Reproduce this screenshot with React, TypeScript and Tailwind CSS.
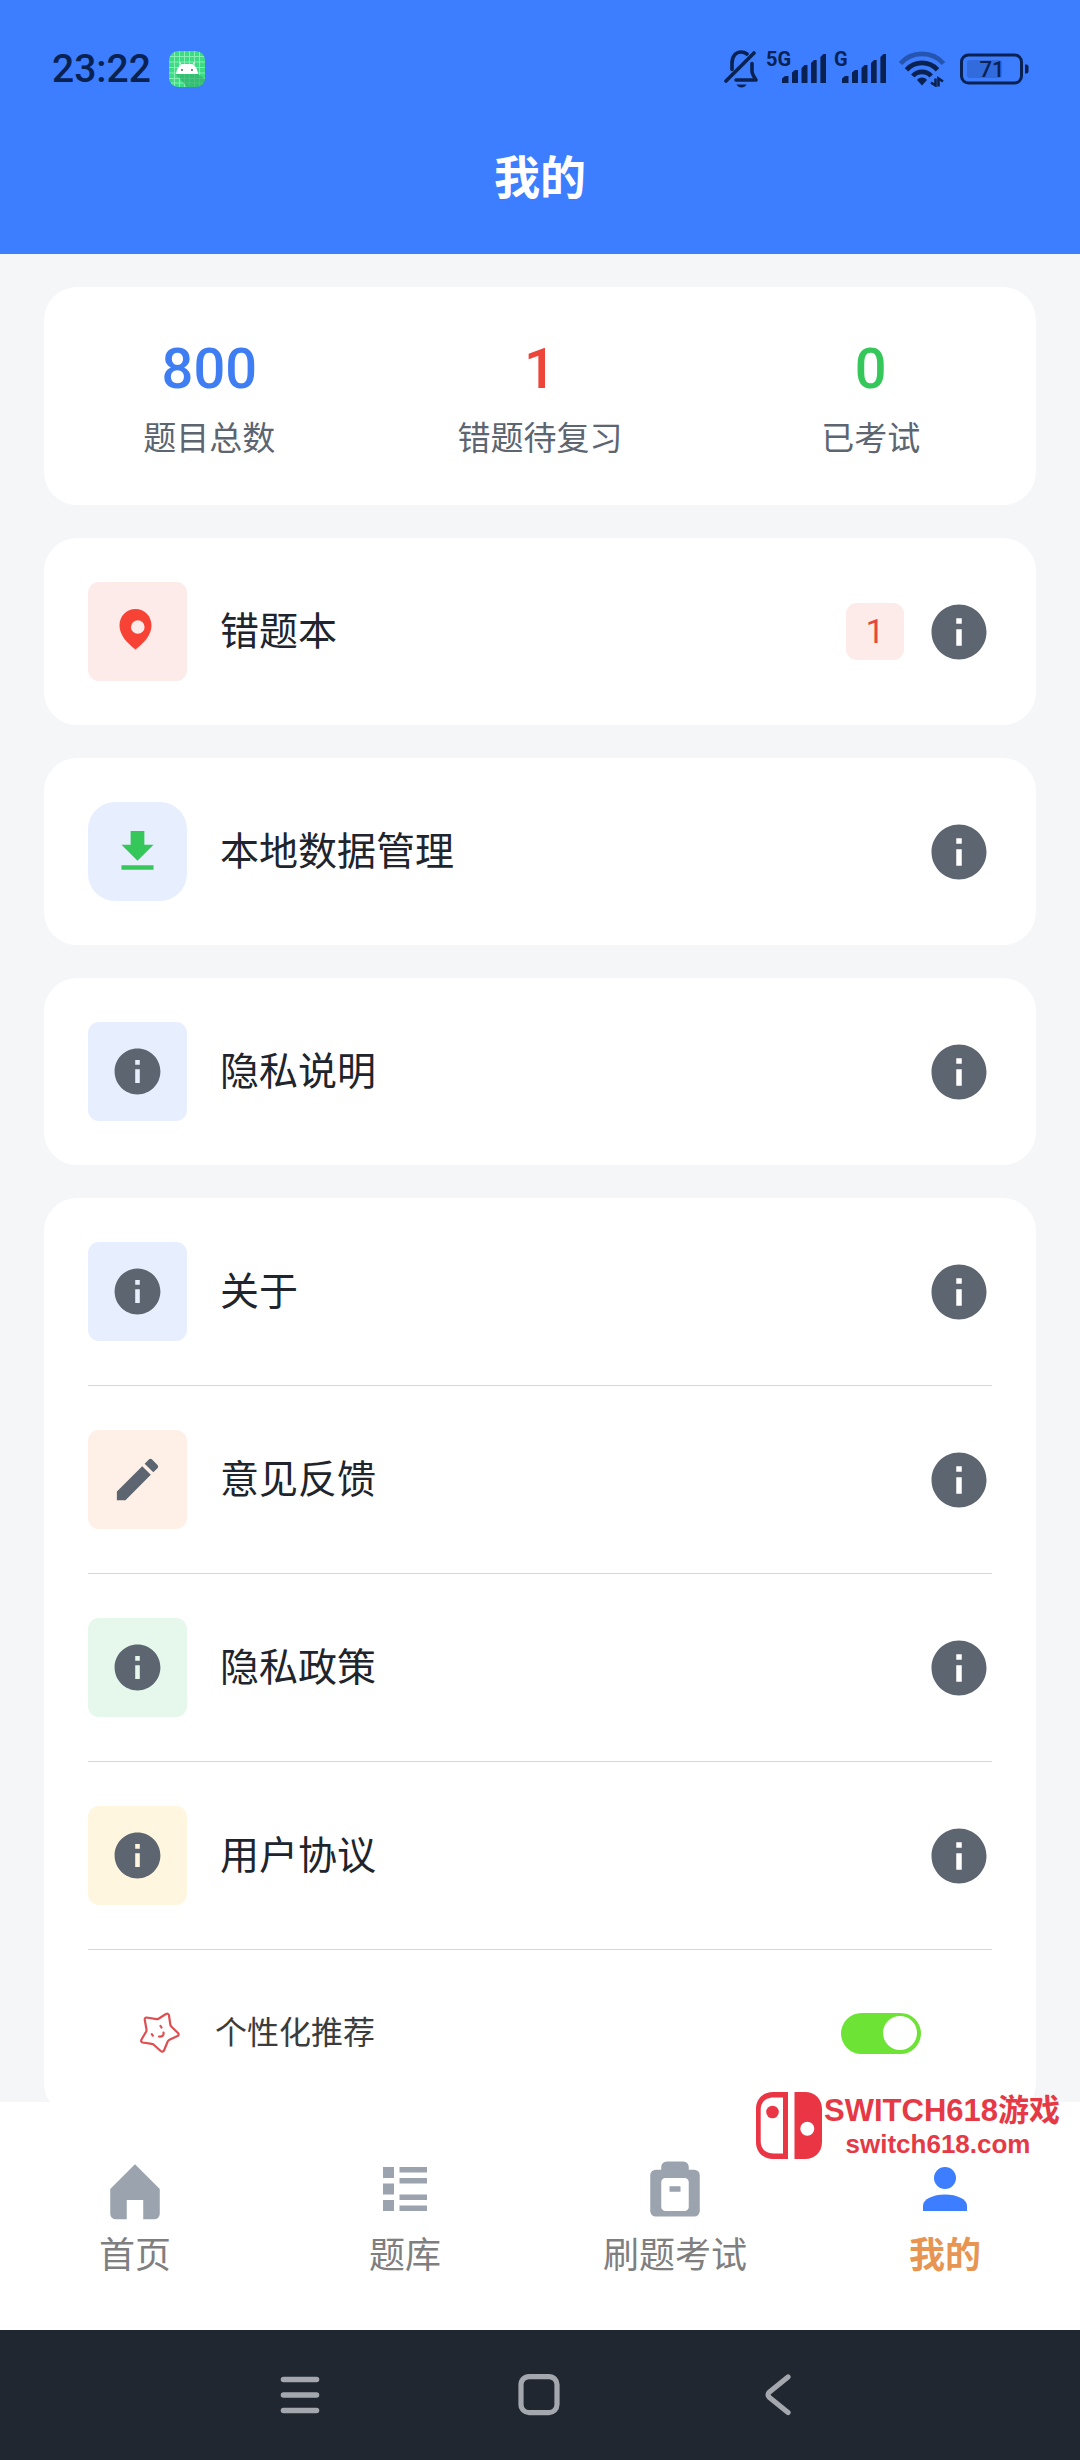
import { useState } from 'react';
import type { ReactNode } from 'react';

interface StatItem {
  label: string;
  value: number;
  color: string;
}

interface MenuItem {
  id: string;
  title: string;
  icon: ReactNode;
  iconClass: string;
  badge?: number;
}

interface TabItem {
  id: string;
  title: string;
  icon: ReactNode;
}

const stats: StatItem[] = [
  { label: '题目总数', value: 800, color: 'text-[#3f7ef2]' },
  { label: '错题待复习', value: 1, color: 'text-[#ee4539]' },
  { label: '已考试', value: 0, color: 'text-[#36c75a]' },
];

const InfoIcon = ({ className }: { className: string }) => (
  <svg viewBox="0 0 24 24" className={className} fill="currentColor" aria-hidden="true">
    <path d="M12 2C6.48 2 2 6.48 2 12s4.48 10 10 10 10-4.48 10-10S17.52 2 12 2zm1 15h-2v-6h2v6zm0-8h-2V7h2v2z" />
  </svg>
);

const PinIcon = () => (
  <svg viewBox="0 0 55 55" className="size-[55px]" fill="#f64336" aria-hidden="true">
    <path
      fillRule="evenodd"
      d="M25.500 5C16.500 5 9.500 12 9.500 21.500C9.500 31 17 39 25.500 45.500C34 39 41.500 31 41.500 21.500C41.500 12 34.500 5 25.500 5ZM27.800 16.200a6.800 6.800 0 1 1 0 13.600a6.800 6.800 0 1 1 0-13.600Z"
    />
  </svg>
);

const DownloadIcon = () => (
  <svg viewBox="0 0 24 24" className="size-[55px]" fill="#36c75a" aria-hidden="true">
    <path d="M19 9h-4V3H9v6H5l7 7 7-7zM5 18v2h14v-2H5z" />
  </svg>
);

const EditIcon = () => (
  <svg viewBox="0 0 24 24" className="size-[55px]" fill="#5c6570" aria-hidden="true">
    <path d="M3 17.250V21h3.750L17.810 9.940l-3.750-3.750L3 17.250zM20.710 7.040c.390-.390.390-1.020 0-1.410l-2.340-2.340c-.390-.390-1.020-.390-1.410 0l-1.830 1.830 3.750 3.750 1.830-1.830z" />
  </svg>
);

const smallInfo = <InfoIcon className="size-[55px] text-[#5c6570]" />;

const mainMenu: MenuItem[] = [
  { id: 'wrong', title: '错题本', icon: <PinIcon />, iconClass: 'rounded-[11px] bg-[#fdebe9]', badge: 1 },
  { id: 'data', title: '本地数据管理', icon: <DownloadIcon />, iconClass: 'rounded-[27px] bg-[#e7efff]' },
  { id: 'privacy', title: '隐私说明', icon: smallInfo, iconClass: 'rounded-[11px] bg-[#e7efff]' },
];

const moreMenu: MenuItem[] = [
  { id: 'about', title: '关于', icon: smallInfo, iconClass: 'rounded-[11px] bg-[#e7efff]' },
  { id: 'feedback', title: '意见反馈', icon: <EditIcon />, iconClass: 'rounded-[11px] bg-[#fff0e7]' },
  { id: 'policy', title: '隐私政策', icon: smallInfo, iconClass: 'rounded-[11px] bg-[#e6f8ec]' },
  { id: 'agreement', title: '用户协议', icon: smallInfo, iconClass: 'rounded-[11px] bg-[#fff6e0]' },
];

const tabs: TabItem[] = [
  {
    id: 'home',
    title: '首页',
    icon: <path d="M12 3L3 12v9a2 2 0 0 0 2 2h4v-7h6v7h4a2 2 0 0 0 2-2v-9z" />,
  },
  {
    id: 'bank',
    title: '题库',
    icon: (
      <path d="M4 4h4v4H4zM4 10h4v4H4zM4 16h4v4H4zM10 4h10v2H10zM10 8h10v2H10zM10 14h10v2H10zM10 18h10v2H10z" />
    ),
  },
  {
    id: 'exam',
    title: '刷题考试',
    icon: (
      <path
        fillRule="evenodd"
        d="M9 2h6a2 2 0 0 1 2 2v1h2a2 2 0 0 1 2 2v13a2 2 0 0 1-2 2H5a2 2 0 0 1-2-2V7a2 2 0 0 1 2-2h2V4a2 2 0 0 1 2-2zM8.500 8A1.500 1.500 0 0 0 7 9.500v9A1.500 1.500 0 0 0 8.500 20h7a1.500 1.500 0 0 0 1.500-1.500v-9A1.500 1.500 0 0 0 15.500 8zM10 11h4v2h-4z"
      />
    ),
  },
  {
    id: 'mine',
    title: '我的',
    icon: (
      <>
        <circle cx="12" cy="8" r="4" />
        <path d="M12 14c-4.420 0-8 1.790-8 4v2h16v-2c0-2.210-3.580-4-8-4z" />
      </>
    ),
  },
];

export default function App() {
  const [activeTab, setActiveTab] = useState('mine');
  const [recommend, setRecommend] = useState(true);

  return (
    <div
      lang="zh-CN"
      className="relative flex h-screen flex-col bg-[#f4f6f8] font-[Roboto,'Noto_Sans_CJK_SC',sans-serif] text-[#20242c]"
    >
      <header className="bg-[#3c7eff]">
        <StatusBar />
        <h1 className="flex h-[151px] items-center justify-center text-[46px] font-bold text-white">我的</h1>
      </header>

      <main className="min-h-0 flex-1 space-y-[33px] overflow-y-auto px-11 pt-[33px] [scrollbar-width:none]">
        <section className="grid grid-cols-3 rounded-[33px] bg-white py-11 text-center">
          {stats.map((stat) => (
            <div key={stat.label}>
              <p className={`text-[56px] leading-[76px] font-medium ${stat.color}`}>{stat.value}</p>
              <p className="mt-2.5 text-[33px] leading-[44px] text-[#5c6570]">{stat.label}</p>
            </div>
          ))}
        </section>

        {mainMenu.map((item) => (
          <section key={item.id} className="rounded-[33px] bg-white px-11">
            <MenuRow item={item} />
          </section>
        ))}

        <section className="rounded-[33px] bg-white px-11">
          {moreMenu.map((item) => (
            <div key={item.id} className="border-b border-[#d6d7d9]">
              <MenuRow item={item} />
            </div>
          ))}
          <div className="flex h-[166px] items-center pr-[71px] pl-[50px]">
            <StarIcon />
            <label htmlFor="recommend" className="ml-[33px] flex-1 text-[32px] text-[#3c3c3c]">
              个性化推荐
            </label>
            <input
              id="recommend"
              type="checkbox"
              role="switch"
              checked={recommend}
              onChange={(e) => setRecommend(e.target.checked)}
              className="flex h-[41px] w-20 appearance-none items-center rounded-full bg-gray-300 px-1 before:size-[34px] before:rounded-full before:bg-white checked:justify-end checked:bg-[#6ce335]"
            />
          </div>
        </section>
      </main>

      <div className="relative">
        <Watermark />
        <nav className="grid grid-cols-4 bg-white pt-[54px] pb-[52px]">
          {tabs.map((tab) => {
            const active = tab.id === activeTab;
            return (
              <a
                key={tab.id}
                href={`#${tab.id}`}
                onClick={() => setActiveTab(tab.id)}
                className="flex flex-col items-center gap-3"
              >
                <svg
                  viewBox="0 0 24 24"
                  fill="currentColor"
                  className={`size-[66px] ${active ? 'text-[#3c7eff]' : 'text-[#9ba3af]'}`}
                  aria-hidden="true"
                >
                  {tab.icon}
                </svg>
                <span
                  className={`text-[36px] leading-[44px] ${active ? 'font-bold text-[#e89551]' : 'text-[#7f7f7f]'}`}
                >
                  {tab.title}
                </span>
              </a>
            );
          })}
        </nav>
      </div>

      <SystemNav />
    </div>
  );
}

function MenuRow({ item }: { item: MenuItem }) {
  return (
    <button type="button" className="flex w-full items-center py-11 text-left">
      <span className={`flex size-[99px] items-center justify-center ${item.iconClass}`}>{item.icon}</span>
      <span className="ml-[33px] flex-1 text-[39px] leading-[52px]">{item.title}</span>
      {item.badge !== undefined && (
        <span className="mr-[22px] flex h-[57px] w-[58px] items-center justify-center rounded-[11px] bg-[#fdebe9] text-[33px] text-[#e5483e]">
          {item.badge}
        </span>
      )}
      <InfoIcon className="size-[66px] text-[#5c6570]" />
    </button>
  );
}

function StarIcon() {
  return (
    <svg
      viewBox="0 0 44 44"
      className="size-11"
      fill="none"
      stroke="#df4f52"
      strokeWidth="2.200"
      strokeLinejoin="round"
      strokeLinecap="round"
      aria-hidden="true"
    >
      <path d="M8.500 6.500L18.500 8.200Q19.500 8.300 20.500 7.700L28 3Q30.500 2 31 4.500L32.300 13.500Q32.500 14.800 33.500 15.700L40 22Q41.500 24 39.500 25L31.500 28.800Q30.300 29.300 29.700 30.500L26 39.500Q24.500 41.500 22.700 40L15.800 33.800Q15 33 13.800 32.900L4.500 31.500Q2.500 30.800 3.500 28.500L8.200 20.500Q8.700 19.500 8.500 18.500L6.800 9Q6.500 6.800 8.500 6.500Z" />
      <path d="M13.800 23.200l1 1.500M22.500 15l1 1.500M21 25.500c3 .8 5-1 4.500-4" />
    </svg>
  );
}

function SignalIcon({ network, width, className }: { network: string; width: number; className: string }) {
  const x = width - 44;
  return (
    <svg viewBox={`0 -6 ${width} 48`} className={className} fill="currentColor" role="img" aria-label={network}>
      <text x="0" y="15" fontSize="20" fontWeight="700">
        {network}
      </text>
      <path
        transform={`translate(${x} 3)`}
        d="M0 29v-4.500l3-2.500h3.500v7zM10 29V18.500l3-2.500h3v13zM19.500 29V14l3-3h3v18zM29 29V9l3-3h2.700v23zM38.400 29V3l3-3H44v29z"
      />
    </svg>
  );
}

function StatusBar() {
  return (
    <div className="flex h-[103px] items-center justify-between pt-[51px] pr-[51px] pb-4 pl-[52px] text-[#0a2252]">
      <div className="flex items-center gap-[18px]">
        <time className="text-[39px] leading-9 font-medium">23:22</time>
        <svg viewBox="0 0 36 36" className="size-9" aria-hidden="true">
          <rect width="36" height="36" rx="9" fill="#3ddc84" />
          <path
            d="M5.500 1v34M10.500 0v36M15.500 0v36M20.500 0v36M25.500 0v36M30.500 1v34M1 5.500h34M0 11h36M0 16.500h36M0 22h36M0 27.500h36M2 32h32"
            stroke="#8ff0b8"
            strokeWidth="0.900"
          />
          <path d="M7 23h22l7 5v1q-1 7-9 7h-9z" fill="#2fb26b" opacity="0.700" />
          <path d="M12.500 14.500l-2-3.500M23.500 14.500l2-3.500" stroke="#fff" strokeWidth="1" />
          <path d="M7 23c.5-5 3-9.500 7.500-10h7c4.500.5 7 5 7.500 10z" fill="#fff" />
          <circle cx="13" cy="19" r="0.900" fill="#2a5b41" />
          <circle cx="23" cy="19" r="0.900" fill="#2a5b41" />
        </svg>
      </div>

      <div className="flex items-center gap-2">
        <svg viewBox="0 0 34 38" className="h-[38px] w-[34px]" fill="none" stroke="currentColor" strokeWidth="3.600" strokeLinecap="round" strokeLinejoin="round" aria-hidden="true">
          <path d="M2 31L30 3M8 19.500V13.500C8 6 12 2 17 2c2.500 0 4.500.8 6 2M28 13.500V21c0 3 2 6 4 9H12" />
          <path d="M12.500 34.500h10c-1.500 4-8.500 4-10 0z" fill="currentColor" stroke="none" />
        </svg>
        <SignalIcon network="5G" width={60} className="h-12 w-[60px]" />
        <SignalIcon network="G" width={52} className="h-12 w-[52px]" />
        <svg viewBox="0 0 54 36" className="h-9 w-[54px]" fill="none" stroke="currentColor" strokeWidth="4.800" aria-hidden="true">
          <path d="M6.500 12.500A29 29 0 0 1 49.500 12.500" opacity="0.450" />
          <path d="M12.500 18.800A21 21 0 0 1 43.500 18.800" />
          <path d="M18.800 25A12.500 12.500 0 0 1 37.200 25" />
          <path d="M28 26.500c2.500 0 4 1 5 2.500L28 34.500l-5-5.500c1-1.500 2.500-2.500 5-2.500z" fill="currentColor" stroke="none" />
          <path d="M37 31.500l4.500 3V27.500M49 30.500L44.500 27.500v8" strokeWidth="2.600" />
        </svg>
        <svg viewBox="0 0 73 32" className="h-8 w-[73px]" role="img" aria-label="71%">
          <rect x="5.500" y="2" width="60" height="28" rx="7" fill="none" stroke="currentColor" strokeWidth="3" />
          <rect x="11" y="7" width="35" height="18" rx="3" fill="#0a2252" opacity="0.200" />
          <path d="M69 11.500h1.500q2 0 2 2v5q0 2-2 2H69z" fill="currentColor" />
          <text x="36" y="24" textAnchor="middle" fontSize="22" fontWeight="500" fill="currentColor">
            71
          </text>
        </svg>
      </div>
    </div>
  );
}

function Watermark() {
  return (
    <div className="pointer-events-none absolute right-5 bottom-full -mb-[57px] flex items-center gap-0.5 text-[#e63946]">
      <svg viewBox="0 0 66 67" className="h-[67px] w-[66px]" fill="#ea3544" aria-hidden="true">
        <path
          fillRule="evenodd"
          d="M17 0h15v67H17C7 67 0 60 0 50V17C0 7 7 0 17 0zM17.500 5.500C10 5.500 4.700 10 4.700 17.500v32C4.700 57 10 61.500 17.500 61.500H27v-56z"
        />
        <circle cx="16.500" cy="20" r="6.300" />
        <path
          fillRule="evenodd"
          d="M38.500 0H49c10 0 17 7 17 17v33c0 10-7 17-17 17H38.500zM51.300 29.700a7 7 0 1 0 0 14a7 7 0 1 0 0-14z"
        />
      </svg>
      <div className="pr-2 text-center font-['Liberation_Sans','Noto_Sans_CJK_SC',sans-serif] font-bold">
        <p className="-mr-2 text-[31px] leading-9">SWITCH618游戏</p>
        <p className="text-[26px] leading-[30px]">switch618.com</p>
      </div>
    </div>
  );
}

function SystemNav() {
  return (
    <div className="flex h-[130px] items-center justify-center gap-[183px] bg-[#212730] text-[#a4a7ae]">
      <button type="button" aria-label="最近任务">
        <svg viewBox="0 0 56 56" className="size-14" stroke="currentColor" strokeWidth="5.600" strokeLinecap="round">
          <path d="M10.500 12.500h33M10.500 28h33M10.500 43.500h33" />
        </svg>
      </button>
      <button type="button" aria-label="主屏幕">
        <svg viewBox="0 0 56 56" className="size-14" fill="none" stroke="currentColor" strokeWidth="5.200">
          <rect x="9" y="9.600" width="36" height="36" rx="8" />
        </svg>
      </button>
      <button type="button" aria-label="返回">
        <svg viewBox="0 0 56 56" className="size-14" fill="none" stroke="currentColor" strokeWidth="5.200" strokeLinecap="round" strokeLinejoin="round">
          <path d="M37 10L18.500 25Q15.500 27.700 18.500 30.500L37 45.500" />
        </svg>
      </button>
    </div>
  );
}
